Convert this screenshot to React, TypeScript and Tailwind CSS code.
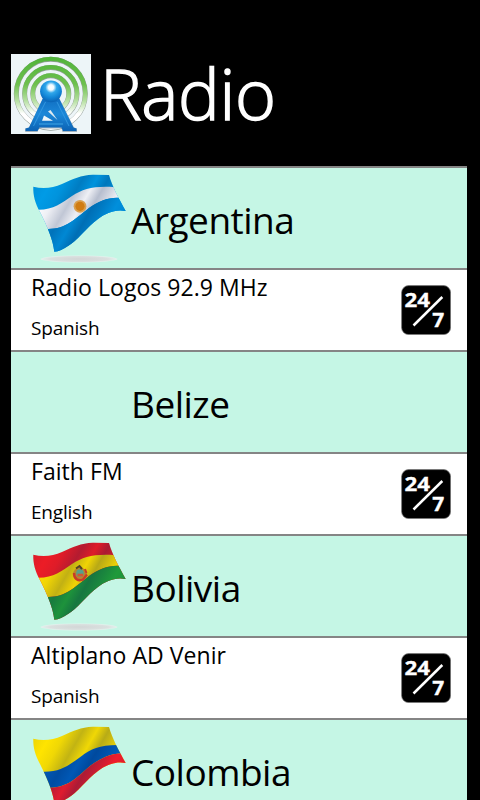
import React from 'react';

type Flag = 'argentina' | 'bolivia' | 'colombia';

type Station = {
   name: string;
   language: string;
};

type Country = {
   name: string;
   flag: Flag | null;
   stations: Station[];
};

const countries: Country[] = [
   { name: 'Argentina', flag: 'argentina', stations: [{ name: 'Radio Logos 92.9 MHz', language: 'Spanish' }] },
   { name: 'Belize', flag: null, stations: [{ name: 'Faith FM', language: 'English' }] },
   { name: 'Bolivia', flag: 'bolivia', stations: [{ name: 'Altiplano AD Venir', language: 'Spanish' }] },
   { name: 'Colombia', flag: 'colombia', stations: [] },
];

const stripes: Record<Flag, string[]> = {
   argentina: ['#009be6', '#fdfdff', '#008fdc'],
   bolivia: ['#ec1c26', '#ffe000', '#1f9a3a'],
   colombia: ['#ffe400', '#005cbc', '#ee1c2c'],
};

const FLAG_SHAPE = 'M2.3 18.7C12 21 22 20 31 16C42 11 50 7 62 6.7L78 7C81 18 88 31 94.7 43C84 41 75 45 67 51C55 60 46 73 37 78C32 81 28 83.5 23.3 83.7C22 72 17 60 9 44C4 35 2 27 2.3 18.7Z';
const EVEN_MIDDLE = 'M0 41.7L6.7 41.7C22 42 31 35 41 28C52 21 62 18 82 19L100 19V30L89.5 30C78 29 68 33 58 40C45 50 35 61 17.3 61L0 61Z';
const EVEN_BOTTOM = 'M0 61L17.3 61C35 61 45 50 58 40C68 33 78 29 89.5 30L100 30V100H0Z';
const WIDE_MIDDLE = 'M0 51.7L12.3 51.7C30 52 38 45 50 36.5C60 29 68 25 86.7 25L100 25V33.5L91 33.5C80 33 68 39 59 46C46 57 38 67 19.7 67.7L0 68Z';
const WIDE_BOTTOM = 'M0 68L19.7 67.7C38 67 46 57 59 46C68 39 80 33 91 33.5L100 33.5V100H0Z';

function FlagIcon({ flag }: { flag: Flag }) {
   const [top, middle, bottom] = stripes[flag];
   const wide = flag === 'colombia';
   return (
      <svg viewBox="0 0 100 100" className="h-[100px] w-[100px]">
         <defs>
            <clipPath id={`${flag}-clip`}>
               <path d={FLAG_SHAPE} />
            </clipPath>
            <linearGradient id={`${flag}-fold`} gradientUnits="userSpaceOnUse" x1="4" y1="20" x2="84" y2="66">
               <stop offset="0" stopColor="#001a50" stopOpacity="0.06" />
               <stop offset="0.12" stopColor="#001a50" stopOpacity="0" />
               <stop offset="0.25" stopColor="#001a50" stopOpacity="0.06" />
               <stop offset="0.4" stopColor="#001a50" stopOpacity="0.24" />
               <stop offset="0.53" stopColor="#001a50" stopOpacity="0.06" />
               <stop offset="0.64" stopColor="#001a50" stopOpacity="0.28" />
               <stop offset="0.74" stopColor="#001a50" stopOpacity="0.16" />
               <stop offset="0.86" stopColor="#001a50" stopOpacity="0" />
               <stop offset="1" stopColor="#001a50" stopOpacity="0.08" />
            </linearGradient>
            <radialGradient id={`${flag}-shadow`}>
               <stop offset="0" stopColor="#d2d6d6" />
               <stop offset="0.75" stopColor="#dae0df" />
               <stop offset="1" stopColor="#e4f2ee" />
            </radialGradient>
         </defs>
         <ellipse cx="48" cy="91" rx="38.5" ry="3.4" fill={`url(#${flag}-shadow)`} />
         <g clipPath={`url(#${flag}-clip)`}>
            <rect width="100" height="100" fill={top} />
            <path d={wide ? WIDE_MIDDLE : EVEN_MIDDLE} fill={middle} />
            <path d={wide ? WIDE_BOTTOM : EVEN_BOTTOM} fill={bottom} />
            <rect width="100" height="100" fill={`url(#${flag}-fold)`} />
         </g>
         {flag === 'argentina' && (
            <>
               <circle cx="49" cy="38.3" r="6.4" fill="#d9a050" />
               <circle cx="49" cy="38.3" r="4.6" fill="#d07c12" />
            </>
         )}
         {flag === 'bolivia' && (
            <>
               <ellipse cx="49" cy="38.2" rx="7" ry="6.8" fill="#b9852c" />
               <path d="M43 37C43 43 47 45.5 52 43.5L56 38.5" fill="none" stroke="#c83a28" strokeWidth="2.4" />
               <circle cx="49" cy="37" r="3.8" fill="#56a08c" />
               <path d="M46.5 39H52" stroke="#d25534" strokeWidth="2.6" />
               <path d="M45 32.5L48.5 30L51 33" fill="none" stroke="#4d4228" strokeWidth="2" />
               <path d="M54 33L55.5 37" stroke="#c83a28" strokeWidth="2" />
            </>
         )}
      </svg>
   );
}

function Logo() {
   return (
      <svg viewBox="0 0 80 80" className="h-20 w-20">
         <defs>
            <linearGradient id="ring" gradientUnits="userSpaceOnUse" x1="0" y1="2" x2="0" y2="76">
               <stop offset="0" stopColor="#4fb23a" />
               <stop offset="0.38" stopColor="#6dc04e" />
               <stop offset="0.6" stopColor="#b4dfa0" />
               <stop offset="0.78" stopColor="#ffffff" />
            </linearGradient>
            <radialGradient id="ball" cx="0.5" cy="0.32" r="0.68">
               <stop offset="0" stopColor="#ffffff" />
               <stop offset="0.18" stopColor="#f2fbff" />
               <stop offset="0.38" stopColor="#2fa6ea" />
               <stop offset="0.7" stopColor="#1285d6" />
               <stop offset="1" stopColor="#0a62b4" />
            </radialGradient>
            <linearGradient id="mast" x1="0" y1="0" x2="0" y2="1">
               <stop offset="0" stopColor="#0f6cc0" />
               <stop offset="0.5" stopColor="#1c88d8" />
               <stop offset="1" stopColor="#0b62b4" />
            </linearGradient>
         </defs>
         <rect width="80" height="80" fill="#edf5f8" />
         <g fill="none">
            <g stroke="#939e99" strokeWidth="5">
               <circle cx="39.8" cy="39.7" r="34.5" />
               <circle cx="39.8" cy="39.7" r="26.2" />
               <circle cx="39.8" cy="39.7" r="18" />
            </g>
            <g stroke="url(#ring)" strokeWidth="4.3">
               <circle cx="39.8" cy="39.4" r="34.5" />
               <circle cx="39.8" cy="39.4" r="26.2" />
               <circle cx="39.8" cy="39.4" r="18" />
            </g>
         </g>
         <path d="M32.5 43H47.5L63 73.5L66 74.5V78H51.5L50.5 74.5H28L26.5 78H14.2V74.5L18 73.5Z" fill="#5d7484" opacity="0.5" />
         <path d="M32.5 43H47.5L62.5 73.5L65.5 74.5V77H52L50.5 73.5H28.5L26.5 77H14.5V74.5L18 73.5Z" fill="url(#mast)" />
         <path d="M37 57.5L39.5 56L46.5 66Z" fill="#dfeaf0" />
         <path d="M33 61.5L31 66.8H42Z" fill="#eef6fa" />
         <path d="M34.5 48L22.5 72M46 48L58 72" stroke="#3297e0" strokeWidth="1" />
         <path d="M28 70H52" stroke="#3fa6e6" strokeWidth="1" />
         <circle cx="40" cy="37.3" r="10.9" fill="url(#ball)" />
      </svg>
   );
}

function AlwaysOnIcon() {
   return (
      <svg viewBox="0 0 50 50" className="h-[50px] w-[50px] shrink-0">
         <rect x="0.6" y="0.6" width="49" height="49" rx="7" fill="#000" stroke="#777" strokeWidth="0.7" />
         <g fill="#fff" stroke="#fff" strokeWidth="0.3" fontSize="20" fontWeight="700">
            <text x="3.6" y="22.2" textLength="25.5" lengthAdjust="spacingAndGlyphs">24</text>
            <text x="31.2" y="41.9" textLength="12" lengthAdjust="spacingAndGlyphs">7</text>
         </g>
         <path d="M12.5 40.5L41.3 12" stroke="#fff" strokeWidth="2.5" />
      </svg>
   );
}

export default function App() {
   return (
      <div className="h-[800px] w-[480px] overflow-hidden bg-black pl-[11px] pr-[13px] font-['Open_Sans',sans-serif] text-black">
         <header className="flex h-[166px] items-start pt-[53px]">
            <div className="pt-px">
               <Logo />
            </div>
            <h1 className="ml-[9px] text-[70px] font-light leading-[80px] tracking-[-0.3px] text-white [-webkit-text-stroke:1.4px_white]">Radio</h1>
         </header>
         {countries.map((country) => (
            <section key={country.name}>
               <div className="flex h-[102px] border-t-2 border-[#858585] bg-[#c5f6e5] pl-5">
                  <div className="w-[100px] shrink-0">{country.flag && <FlagIcon flag={country.flag} />}</div>
                  <h2 className="pt-[25px] text-[37px] leading-[54px] tracking-[-0.5px]">{country.name}</h2>
               </div>
               {country.stations.map((station) => (
                  <div key={station.name} className="flex h-[82px] items-center justify-between border-t-2 border-[#858585] bg-white pl-5 pr-4">
                     <div className="h-full">
                        <p className="pt-px text-[23px] leading-8 tracking-[0.05px]">{station.name}</p>
                        <p className="pt-[11px] text-[19px] leading-7 tracking-[-0.2px]">{station.language}</p>
                     </div>
                     <AlwaysOnIcon />
                  </div>
               ))}
            </section>
         ))}
      </div>
   );
}
